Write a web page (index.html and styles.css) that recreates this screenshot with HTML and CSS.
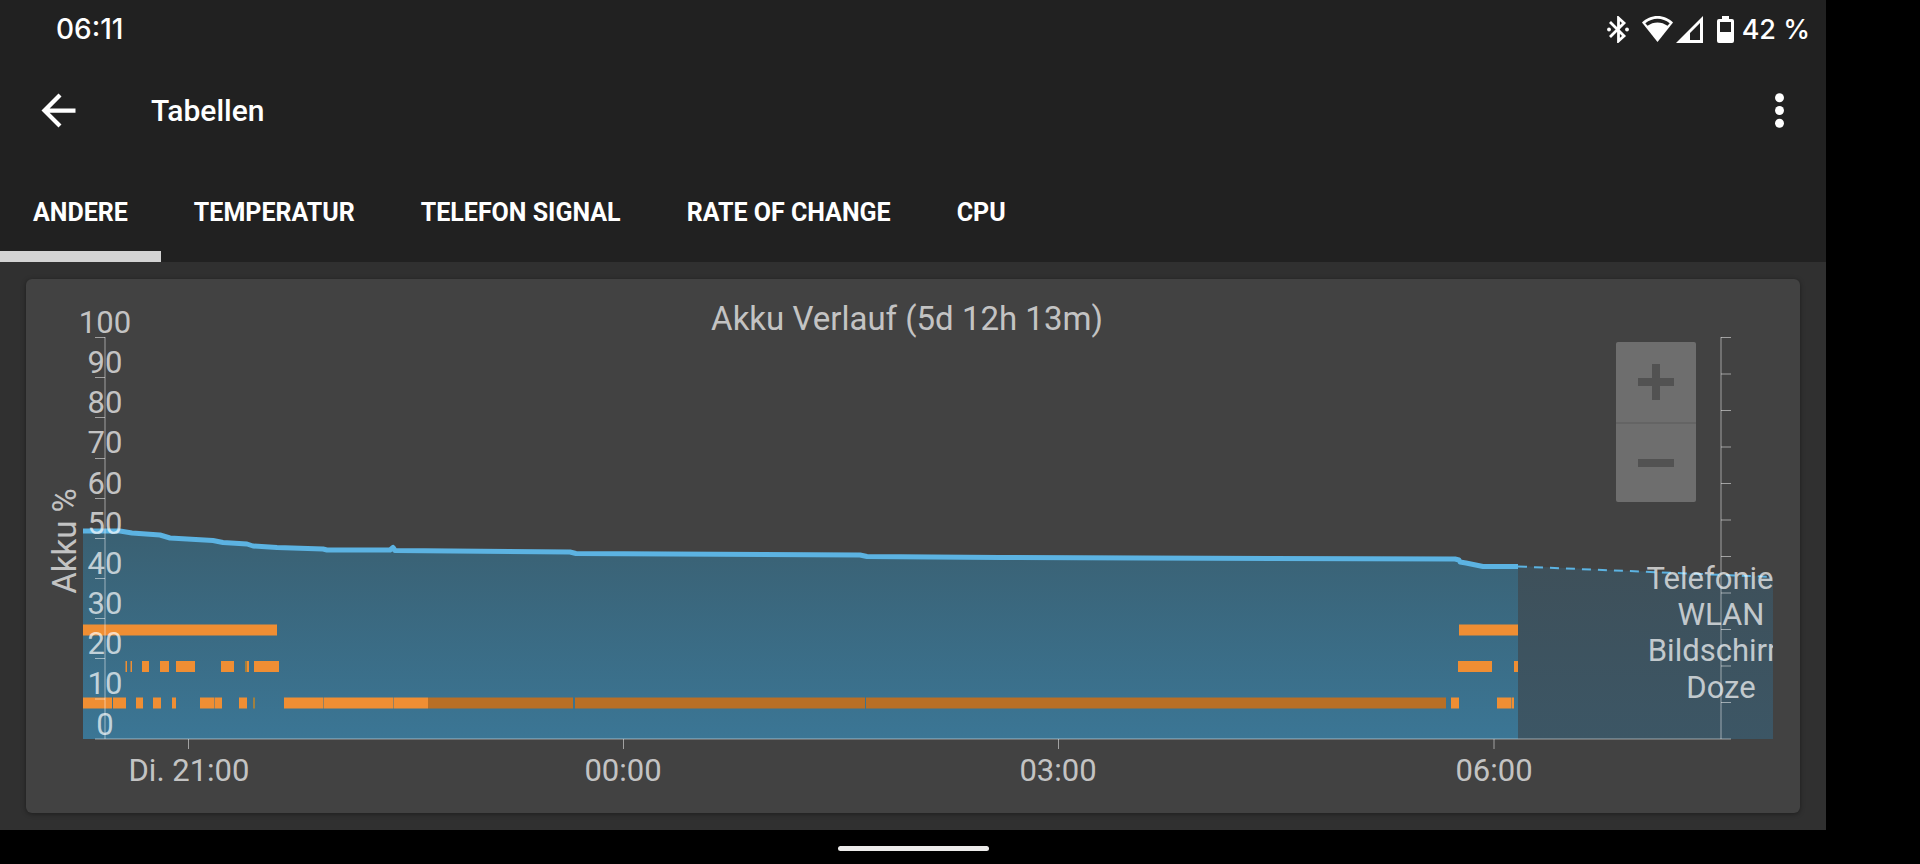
FILE: index.html
```html
<!DOCTYPE html>
<html lang="de">
<head>
    <meta charset="UTF-8">
    <meta name="viewport" content="width=device-width, initial-scale=1.0">
    <title>Tabellen</title>
    <link rel="stylesheet" href="styles.css">
</head>
<body>
    <div class="screen">
        <div class="status-bar">
            <span class="clock">06:11</span>
            <div class="status-icons">
                <svg class="bluetooth" width="22" height="27" viewBox="0 0 22 27">
                    <path d="M3 6 L17 20 L11.500 25 V2 L17 7 L3 21" fill="none" stroke="#fff" stroke-width="2.800"/>
                    <circle cx="2" cy="13.500" r="1.900" fill="#fff"/>
                    <circle cx="20" cy="13.500" r="1.900" fill="#fff"/>
                </svg>
                <svg class="wifi" width="31" height="27" viewBox="0 0 31 27">
                    <path d="M15.500 0 C9.500 0 4 2.500 0 6.500 L15.500 26 L31 6.500 C27 2.500 21.500 0 15.500 0 Z" fill="#fff"/>
                    <path d="M3.300 7.300 C10.500 1.300 20.500 1.300 27.700 7.300 L25.500 9.800 C19.500 5.300 11.500 5.300 5.500 9.800 Z" fill="#212121"/>
                </svg>
                <svg class="signal" width="27" height="27" viewBox="0 0 27 27">
                    <path d="M0 27 L27 0 V27 Z M24 7 L14 17 V24 H24 Z" fill="#fff" fill-rule="evenodd"/>
                </svg>
                <svg class="battery" width="17" height="27" viewBox="0 0 17 27">
                    <path d="M5 0 H12 V3 H15 Q17 3 17 5 V25 Q17 27 15 27 H2 Q0 27 0 25 V5 Q0 3 2 3 H5 Z M3 6 V16 H14 V6 Z" fill="#fff" fill-rule="evenodd"/>
                </svg>
                <span>42 %</span>
            </div>
        </div>

        <header class="app-bar">
            <button class="icon-button" type="button" aria-label="Zurück">
                <svg viewBox="0 0 24 24"><path d="M20 11H7.830l5.590-5.590L12 4l-8 8 8 8 1.410-1.410L7.830 13H20v-2z"/></svg>
            </button>
            <h1>Tabellen</h1>
            <button class="icon-button" type="button" aria-label="Menü">
                <svg viewBox="0 0 24 24"><circle cx="12" cy="6" r="2.100"/><circle cx="12" cy="12" r="2.100"/><circle cx="12" cy="18" r="2.100"/></svg>
            </button>
        </header>

        <nav class="tabs">
            <button class="tab active" type="button">ANDERE</button>
            <button class="tab" type="button">TEMPERATUR</button>
            <button class="tab" type="button">TELEFON SIGNAL</button>
            <button class="tab" type="button">RATE OF CHANGE</button>
            <button class="tab" type="button">CPU</button>
        </nav>

        <main class="content">
            <section class="card">
                <svg class="chart" viewBox="26 279 1774 534">
                    <defs>
                        <linearGradient id="fill" gradientUnits="userSpaceOnUse" x1="0" y1="531" x2="0" y2="739">
                            <stop offset="0" stop-color="#3a6072"/>
                            <stop offset="1" stop-color="#3b7695"/>
                        </linearGradient>
                        <linearGradient id="forecast" gradientUnits="userSpaceOnUse" x1="0" y1="566" x2="0" y2="739">
                            <stop offset="0" stop-color="#3e505a"/>
                            <stop offset="1" stop-color="#3c5665"/>
                        </linearGradient>
                        <clipPath id="plot"><rect x="82" y="279" width="1691" height="534"/></clipPath>
                    </defs>

                    <text class="label title" x="907" y="330">Akku Verlauf (5d 12h 13m)</text>
                    <text class="label title" transform="translate(76 541) rotate(-90)">Akku %</text>

                    <!-- Akkustand -->
                    <path fill="url(#fill)" d="M83 739 V531 H123 L132 533 L160 535 L170 538 L213 540 L223 542 L247 544 L253 546 L277 547 L323 549 L327 550 H390 L395 550 L570 552 L576 553 L860 555 L867 556 L1000 557 L1455 559 L1460 562 L1483 566 H1518 V739 Z"/>
                    <path fill="url(#forecast)" d="M1518 739 V566 L1773 577 V739 Z"/>
                    <path class="line" d="M83 531 H120 L132 533 L160 535 L170 538 L213 540.500 L223 542.500 L247 544 L253 546 L277 547.500 L323 549 L327 550 H390 L393 547.500 L395 550.500 L570 552 L576 553.500 L860 555 L867 556.500 L1000 557.500 L1455 559 L1459 560 L1460 562 L1466 563 L1483 566.500 H1518"/>
                    <path class="forecast-line" d="M1518 566.500 L1773 577"/>

                    <!-- WLAN -->
                    <path class="bar" d="M83 630H277 M1459 630H1518"/>
                    <!-- Bildschirm -->
                    <path class="bar" d="M125.500 666.500h1.500 M130.500 666.500h1.500 M142 666.500h7 M160 666.500h9 M176 666.500h19 M221 666.500h13 M247 666.500h2 M254 666.500h25 M1458 666.500h34 M1514 666.500h4"/>
                    <path class="bar dim" d="M245 666.500h2 M253 703h2"/>
                    <!-- Doze -->
                    <path class="bar" d="M83 703h29 M113 703h13 M136 703h7 M153 703h8 M172 703h4 M200 703h14 M214.500 703h7.500 M239 703h8 M284 703h39 M323.500 703h69.500 M393.500 703h34.500 M1451 703h8 M1497 703h14.500 M1512 703h2"/>
                    <path class="bar deep" d="M428 703h145 M575 703h290 M866 703h580"/>

                    <path class="axis" d="M95 739H1731 M105 337V739 M95 337.500h10 M95 377.500h10 M95 417.500h10 M95 458.500h10 M95 498.500h10 M95 538.500h10 M95 578.500h10 M95 618.500h10 M95 658.500h10 M95 699h10"/>
                    <path class="axis" d="M1721 337V739 M1721 337.500h10 M1721 374h10 M1721 410.500h10 M1721 447h10 M1721 483.500h10 M1721 520h10 M1721 556.500h10 M1721 593h10 M1721 629.500h10 M1721 666h10 M1721 702.500h10"/>
                    <path class="axis" d="M188.500 739v10 M623.500 739v10 M1058.500 739v10 M1494 739v10"/>

                    <g class="label">
                        <text x="105" y="333">100</text>
                        <text x="105" y="373">90</text>
                        <text x="105" y="413">80</text>
                        <text x="105" y="453">70</text>
                        <text x="105" y="494">60</text>
                        <text x="105" y="534">50</text>
                        <text x="105" y="574">40</text>
                        <text x="105" y="614">30</text>
                        <text x="105" y="654">20</text>
                        <text x="105" y="694">10</text>
                        <text x="105" y="735">0</text>
                        <text x="189" y="781">Di. 21:00</text>
                        <text x="623" y="781">00:00</text>
                        <text x="1058" y="781">03:00</text>
                        <text x="1494" y="781">06:00</text>
                    </g>
                    <g class="label" clip-path="url(#plot)">
                        <text x="1710" y="589">Telefonie</text>
                        <text x="1721" y="625">WLAN</text>
                        <text x="1721" y="661">Bildschirm</text>
                        <text x="1721" y="698">Doze</text>
                    </g>
                </svg>
                <div class="zoom">
                    <button type="button" aria-label="Vergrößern"><svg viewBox="0 0 36 36"><path d="M14 0h8v14h14v8H22v14h-8V22H0v-8h14z"/></svg></button>
                    <button type="button" aria-label="Verkleinern"><svg viewBox="0 0 36 36"><path d="M0 14h36v8H0z"/></svg></button>
                </div>
            </section>
        </main>

        <div class="nav-bar"><div class="pill"></div></div>
    </div>
</body>
</html>
```
FILE: styles.css
```css
* {
    box-sizing: border-box;
}
body {
    margin: 0;
    padding-right: 94px;
    background-color: #000;
    color: #fff;
    font-family: Roboto, sans-serif;
}
button {
    padding: 0;
    border: none;
    background: none;
    color: inherit;
    font: inherit;
}
svg {
    display: block;
}
.screen {
    display: flex;
    flex-direction: column;
    min-height: 100vh;
    background-color: #212121;
}
.status-bar {
    display: flex;
    align-items: center;
    justify-content: space-between;
    height: 58px;
    padding: 0 16px 0 56px;
    font-family: Inter, sans-serif;
    font-size: 27px;
    font-weight: 500;
}
.clock {
    font-size: 28px;
}
.status-icons {
    display: flex;
    align-items: center;
}
.wifi {
    margin-left: 13px;
}
.signal {
    margin-left: 3px;
}
.battery {
    margin: 0 8px 0 14px;
}
.app-bar {
    display: flex;
    align-items: center;
    height: 104px;
    padding: 0 21px 0 33px;
}
.app-bar h1 {
    flex: 1;
    margin: 0 0 0 67px;
    font-size: 30px;
    font-weight: 500;
}
.icon-button svg {
    width: 51px;
    height: 51px;
    fill: #fff;
}
.tabs {
    display: flex;
    height: 100px;
}
.tab {
    padding: 0 33px;
    font-size: 25px;
    font-weight: 700;
    border-top: 11px solid transparent;
    border-bottom: 11px solid transparent;
}
.tab.active {
    border-bottom-color: #d3d3d3;
}
.content {
    flex: 1;
    padding: 17px 26px;
    background-color: #303030;
}
.card {
    position: relative;
    border-radius: 6px;
    background-color: #424242;
    box-shadow: 0 1px 5px rgba(0, 0, 0, 0.4);
}
.chart {
    width: 100%;
    height: auto;
}
.label {
    fill: #fff;
    fill-opacity: 0.7;
    font-size: 31px;
    text-anchor: middle;
}
.title {
    font-size: 33px;
}
.line {
    fill: none;
    stroke: #5cb3e2;
    stroke-width: 5;
    stroke-linejoin: round;
}
.forecast-line {
    fill: none;
    stroke: #5cb3e2;
    stroke-width: 2;
    stroke-dasharray: 9 7;
}
.bar {
    stroke: #ef8e33;
    stroke-width: 11;
}
.dim {
    stroke: #a0803f;
}
.deep {
    stroke: #b86f26;
}
.axis {
    fill: none;
    stroke: #fff;
    stroke-opacity: 0.5;
    stroke-width: 1;
}
.zoom {
    position: absolute;
    top: 63px;
    right: 104px;
    width: 80px;
    border-radius: 2px;
    background-color: #6e6e6e;
}
.zoom button {
    display: flex;
    align-items: center;
    justify-content: center;
    width: 100%;
    height: 80px;
}
.zoom button + button {
    border-top: 2px solid #646464;
}
.zoom svg {
    width: 36px;
    height: 36px;
    fill: #525252;
}
.nav-bar {
    display: flex;
    align-items: center;
    justify-content: center;
    height: 34px;
    padding-top: 2px;
    background-color: #000;
}
.pill {
    width: 151px;
    height: 5px;
    border-radius: 3px;
    background-color: #ecebea;
}
```
